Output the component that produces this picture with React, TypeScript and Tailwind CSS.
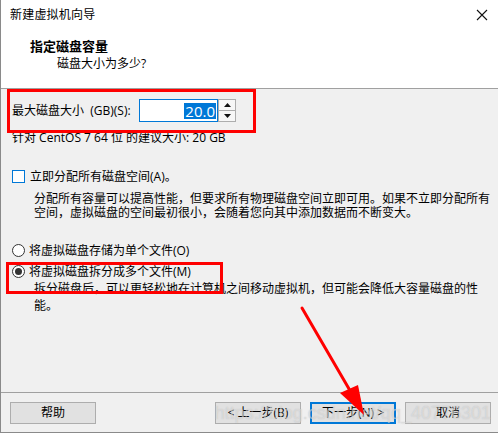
import React from "react";

const cjk = "font-['Open_Sans','Noto_Sans_CJK_SC','Microsoft_YaHei',sans-serif]";

const Radio: React.FC<{ checked?: boolean; label: string }> = ({ checked, label }) => (
  <div className="flex h-[17px] items-center">
    <span className="flex h-[13px] w-[13px] items-center justify-center rounded-full border border-[#333] bg-white">
      {checked && <span className="h-[7px] w-[7px] rounded-full bg-[#333]" />}
    </span>
    <span className="ml-[4px] leading-[17px]">{label}</span>
  </div>
);

const WizButton: React.FC<{ label: string; primary?: boolean; className?: string }> = ({
  label,
  primary,
  className = "",
}) => (
  <div
    className={`flex h-[22px] w-[86px] items-center justify-center bg-[#e1e1e1] leading-none ${
      primary ? "border-2 border-[#0078d7]" : "border border-[#adadad]"
    } ${className}`}
  >
    {label}
  </div>
);

export default function App() {
  return (
    <div className={`relative h-[434px] w-[498px] overflow-hidden bg-white text-[12px] text-black ${cjk}`}>
      <div className="flex h-[433px] flex-col border-l border-[#8a8a8a]">
        {/* header */}
        <div className="h-[89px] border-b border-[#a0a0a0] bg-white">
          <div className="flex h-[30px] items-center justify-between pl-[9px] pr-[9px]">
            <span className="tracking-[0.2px]">新建虚拟机向导</span>
            <svg width="12" height="12" viewBox="0 0 12 12" className="mr-[1px]">
              <path d="M1 1 L11 11 M11 1 L1 11" stroke="#111" strokeWidth="1.1" />
            </svg>
          </div>
          <div className="mt-[8px] pl-[29px] text-[13px] font-bold leading-[17px]">指定磁盘容量</div>
          <div className="pl-[56px] leading-[17px]">磁盘大小为多少?</div>
        </div>

        {/* body */}
        <div className="flex flex-1 flex-col bg-[#f0f0f0] pl-[11px]">
          <div className="mt-[10px] flex h-[23px] items-center">
            <span className="w-[127px] whitespace-nowrap">最大磁盘大小&nbsp; (GB)(S):</span>
            <div className="flex h-[23px] w-[79px] items-center justify-end border border-[#0078d7] bg-white pr-[1px]">
              <span className="bg-[#0078d7] px-[1px] text-[15px] leading-[16px] text-white">20.0</span>
            </div>
            <div className="flex h-[23px] w-[18px] flex-col border border-[#adadad] bg-[#f0f0f0]">
              <div className="flex flex-1 items-center justify-center border-b border-[#adadad] bg-[#f7f7f7]">
                <svg width="7" height="4" viewBox="0 0 7 4">
                  <path d="M0 4 L3.5 0 L7 4 Z" fill="#111" />
                </svg>
              </div>
              <div className="flex flex-1 items-center justify-center bg-[#f7f7f7]">
                <svg width="7" height="4" viewBox="0 0 7 4">
                  <path d="M0 0 L3.5 4 L7 0 Z" fill="#111" />
                </svg>
              </div>
            </div>
          </div>
          <div className="mt-[8px] h-[16px] whitespace-nowrap leading-[16px]">针对 CentOS 7 64 位 的建议大小: 20 GB</div>

          <div className="mt-[22px] flex h-[17px] items-center">
            <span className="h-[13px] w-[13px] border border-[#0078d7] bg-white" />
            <span className="ml-[5px] leading-[17px]">立即分配所有磁盘空间(A)。</span>
          </div>
          <div className="mt-[7px] whitespace-nowrap pl-[22px] leading-[14px]">
            分配所有容量可以提高性能，但要求所有物理磁盘空间立即可用。如果不立即分配所有
            <br />
            空间，虚拟磁盘的空间最初很小，会随着您向其中添加数据而不断变大。
          </div>

          <div className="mt-[22px]">
            <Radio label="将虚拟磁盘存储为单个文件(O)" />
          </div>
          <div className="mt-[4px]">
            <Radio checked label="将虚拟磁盘拆分成多个文件(M)" />
          </div>
          <div className="whitespace-nowrap pl-[22px] leading-[17px]">
            拆分磁盘后，可以更轻松地在计算机之间移动虚拟机，但可能会降低大容量磁盘的性
            <br />
            能。
          </div>
        </div>

        {/* footer */}
        <div className="flex h-[41px] items-start border-y border-[#8a8a8a] border-t-[#a0a0a0] bg-[#f0f0f0] pt-[9px] pl-[9px] pr-[7px]">
          <WizButton label="帮助" />
          <WizButton label="< 上一步(B)" className="ml-auto" />
          <WizButton label="下一步(N) >" primary className="ml-[9px]" />
          <WizButton label="取消" className="ml-[9px]" />
        </div>
      </div>

      {/* annotations */}
      <div className="pointer-events-none absolute left-[7px] top-[89px] h-[44px] w-[249px] border-[3px] border-[#fe0000]" />
      <div className="pointer-events-none absolute left-[6px] top-[262px] h-[32px] w-[217px] border-[3px] border-[#fe0000]" />
      <div className="pointer-events-none absolute right-[7px] top-[402px] whitespace-nowrap font-['Liberation_Sans',sans-serif] text-[18px] leading-[22px] text-white/40 [text-shadow:0_0_1px_rgba(150,150,150,0.5)]">
        https://blog.csdn.net/qq_40776301
      </div>
      <svg className="pointer-events-none absolute left-0 top-0" width="498" height="434" viewBox="0 0 498 434">
        <path d="M302 308 L352 394" stroke="#f00" strokeWidth="3" strokeLinecap="round" />
        <path d="M364 415 L340 393 L358 385 Z" fill="#f00" />
      </svg>
    </div>
  );
}
